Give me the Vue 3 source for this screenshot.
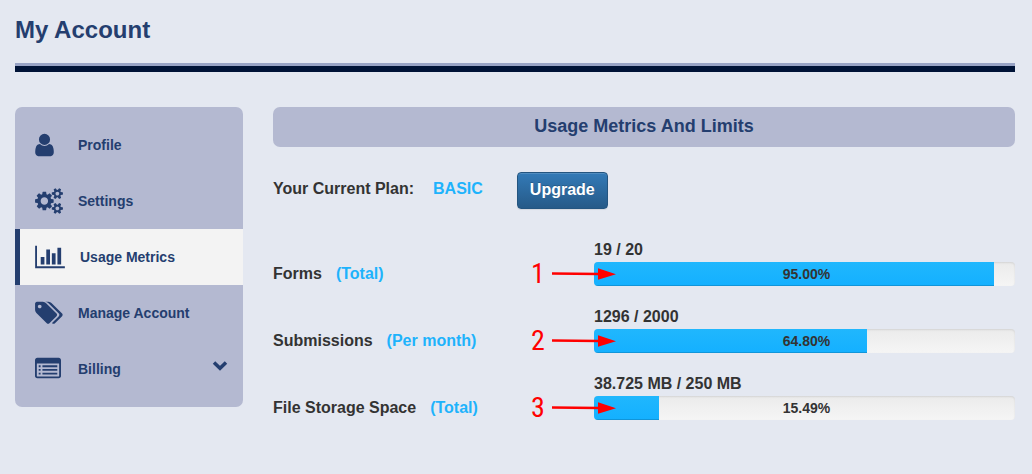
<script setup>
import { ref } from 'vue'

const active = ref('usage')

// icon box is 1792 units high, w is the drawn width in px
const menu = [
  {
    id: 'profile', label: 'Profile', w: 19, box: '256 0 1280 1792',
    d: 'M1536 1399q0 109-62.5 187t-150.5 78h-854q-88 0-150.5-78t-62.5-187q0-85 8.5-160.5t31.5-152 58.5-131 94-89 134.5-34.5q131 128 313 128t313-128q76 0 134.5 34.5t94 89 58.5 131 31.5 152 8.5 160.5zm-256-887q0 159-112.5 271.5t-271.5 112.5-271.5-112.5-112.5-271.5 112.5-271.5 271.5-112.5 271.5 112.5 112.5 271.5z',
  },
  {
    id: 'settings', label: 'Settings', w: 28, box: '-64 0 1920 1792',
    d: 'M832 896q0-106-75-181t-181-75-181 75-75 181 75 181 181 75 181-75 75-181zm768 512q0-52-38-90t-90-38-90 38-38 90q0 53 37.5 90.5t90.5 37.5 90.5-37.5 37.5-90.5zm0-1024q0-52-38-90t-90-38-90 38-38 90q0 53 37.5 90.5t90.5 37.5 90.5-37.5 37.5-90.5zm-384 421v185q0 10-7 19.5t-16 10.5l-155 24q-11 35-32 76 34 48 90 115 7 11 7 20 0 12-7 19-23 30-82.5 89.5t-78.5 59.5q-11 0-21-7l-115-90q-37 19-77 31-11 108-23 155-7 24-30 24h-186q-11 0-20-7.5t-10-17.5l-23-153q-34-10-75-31l-118 89q-7 7-20 7-11 0-21-8-144-133-144-160 0-9 7-19 10-14 41-53t47-61q-23-44-35-82l-152-24q-10-1-17-9.5t-7-19.5v-185q0-10 7-19.5t16-10.5l155-24q11-35 32-76-34-48-90-115-7-11-7-20 0-12 7-20 22-30 82-89t79-59q11 0 21 7l115 90q34-18 77-32 11-108 23-154 7-24 30-24h186q11 0 20 7.5t10 17.5l23 153q34 10 75 31l118-89q8-7 20-7 11 0 21 8 144 133 144 160 0 8-7 19-12 16-42 54t-45 60q23 48 34 82l152 23q10 2 17 10.5t7 19.5zm640 533v140q0 16-149 31-12 27-30 52 51 113 51 138 0 4-4 7-122 71-124 71-8 0-46-47t-52-68q-20 2-30 2t-30-2q-14 21-52 68t-46 47q-2 0-124-71-4-3-4-7 0-25 51-138-18-25-30-52-149-15-149-31v-140q0-16 149-31 13-29 30-52-51-113-51-138 0-4 4-7 4-2 35-20t59-34 30-16q8 0 46 46.5t52 67.5q20-2 30-2t30 2q51-71 92-112l6-2q4 0 124 70 4 3 4 7 0 25-51 138 17 23 30 52 149 15 149 31zm0-1024v140q0 16-149 31-12 27-30 52 51 113 51 138 0 4-4 7-122 71-124 71-8 0-46-47t-52-68q-20 2-30 2t-30-2q-14 21-52 68t-46 47q-2 0-124-71-4-3-4-7 0-25 51-138-18-25-30-52-149-15-149-31v-140q0-16 149-31 13-29 30-52-51-113-51-138 0-4 4-7 4-2 35-20t59-34 30-16q8 0 46 46.5t52 67.5q20-2 30-2t30 2q51-71 92-112l6-2q4 0 124 70 4 3 4 7 0 25-51 138 17 23 30 52 149 15 149 31z',
  },
  {
    id: 'usage', label: 'Usage Metrics', w: 30, box: '0 0 2048 1792',
    d: 'M640 896v512h-256v-512h256zm384-512v1024h-256v-1024h256zm1024 1152v128h-2048v-1536h128v1408h1920zm-640-896v768h-256v-768h256zm384-384v1152h-256v-1152h256z',
  },
  {
    id: 'manage', label: 'Manage Account', w: 28, box: '0 0 1920 1792',
    d: 'M448 448q0-53-37.5-90.5t-90.5-37.5-90.5 37.5-37.5 90.5 37.5 90.5 90.5 37.5 90.5-37.5 37.5-90.5zm1067 576q0 53-37 90l-491 492q-39 37-91 37-53 0-90-37l-715-716q-38-37-64.5-101t-26.5-117v-416q0-52 38-90t90-38h416q53 0 117 26.5t102 64.5l715 714q37 39 37 91zm384 0q0 53-37 90l-491 492q-39 37-91 37-36 0-59-14t-53-45l470-470q37-37 37-90 0-52-37-91l-715-714q-38-38-102-64.5t-117-26.5h224q53 0 117 26.5t102 64.5l715 714q37 39 37 91z',
  },
  {
    id: 'billing', label: 'Billing', w: 26, box: '0 0 1792 1792', more: true,
    d: 'M256 640h128v128h-128zM512 640h1024v128h-1024zM256 896h128v128h-128zM512 896h1024v128h-1024zM256 1152h128v128h-128zM512 1152h1024v128h-1024zM1664 1376v-832q0-13-9.500-22.500t-22.500-9.500h-1472q-13 0-22.500 9.500t-9.500 22.500v832q0 13 9.500 22.500t22.500 9.500h1472q13 0 22.500-9.500t9.500-22.500zm128-1088v1088q0 66-47 113t-113 47h-1472q-66 0-113-47t-47-113v-1088q0-66 47-113t113-47h1472q66 0 113 47t47 113z',
  },
]

const metrics = [
  { n: 1, name: 'Forms', scope: 'Total', usage: '19 / 20', pct: '95.00' },
  { n: 2, name: 'Submissions', scope: 'Per month', usage: '1296 / 2000', pct: '64.80' },
  { n: 3, name: 'File Storage Space', scope: 'Total', usage: '38.725 MB / 250 MB', pct: '15.49' },
]
</script>

<template>
  <div class="account">
    <header class="page-head">
      <h1>My Account</h1>
    </header>

    <div class="columns">
      <nav class="side">
        <a
          v-for="m in menu"
          :key="m.id"
          href="#"
          class="side-item"
          :class="{ active: active === m.id }"
          @click.prevent="active = m.id"
        >
          <span class="side-icon">
            <svg :width="m.w" height="26" :viewBox="m.box" aria-hidden="true"><path :d="m.d" /></svg>
          </span>
          <span>{{ m.label }}</span>
          <svg v-if="m.more" class="chevron" width="16" height="16" viewBox="0 0 16 16" aria-hidden="true">
            <path d="M2 4.500L8 10.300L14 4.500" />
          </svg>
        </a>
      </nav>

      <main class="content">
        <h2>Usage Metrics And Limits</h2>

        <div class="plan">
          <span>Your Current Plan:</span>
          <span class="blue">BASIC</span>
          <button type="button" class="upgrade">Upgrade</button>
        </div>

        <section v-for="m in metrics" :key="m.n" class="metric">
          <div class="metric-name">
            <span :id="'metric-' + m.n">{{ m.name }}</span>
            <span class="blue">({{ m.scope }})</span>
          </div>
          <div class="metric-value">
            <div class="usage">{{ m.usage }}</div>
            <div
              class="track"
              role="progressbar"
              :aria-labelledby="'metric-' + m.n"
              :aria-valuenow="m.pct"
              aria-valuemin="0"
              aria-valuemax="100"
            >
              <div class="fill" :style="{ width: m.pct + '%' }" />
              <span class="pct">{{ m.pct }}%</span>
            </div>
            <div class="callout">
              <span>{{ m.n }}</span>
              <svg width="66" height="14" viewBox="0 0 66 14" aria-hidden="true">
                <path d="M1 6.500L48 7" stroke="#f00" stroke-width="2.400" />
                <path d="M47 1.200L65 7.300L47 12.800z" fill="#f00" />
              </svg>
            </div>
          </div>
        </section>
      </main>
    </div>
  </div>
</template>

<style>
body { background:#e4e8f1; }
</style>

<style scoped>
.account {
  padding:15px 17px 15px 15px;
  font-family:"Liberation Sans", Arial, sans-serif;
  font-size:16px; line-height:20px; font-weight:bold; color:#333;
}
h1, h2 { margin:0; color:#243e6f; }
h1 { font-size:24px; line-height:30px; }

.page-head::after { content:""; display:block; height:6px; margin-top:18px; border-top:3px solid #98a3c5; background:#001337; }

.columns { display:flex; align-items:flex-start; gap:30px; padding-top:35px; }

.side { flex:0 0 228px; padding:10px 0; border-radius:7px; background:#b4b9d1; }
.side-item {
  display:flex; align-items:center; gap:15px; box-sizing:border-box;
  height:56px; padding:0 15px; border-left:5px solid transparent;
  color:#243e6f; font-size:14px; text-decoration:none;
}
.side-item.active { background:#f3f3f3; border-left-color:#243e6f; }
.side-icon { display:flex; min-width:28px; }
.side-icon svg { display:block; fill:currentColor; }
.chevron { margin-left:auto; padding-bottom:6px; fill:none; stroke:currentColor; stroke-width:3.5; }

.content { flex:1; min-width:0; }
h2 { height:40px; border-radius:7px; background:#b4b9d1; font-size:18px; line-height:38px; text-align:center; }

.blue { color:#1eb3fc; }
.plan { display:flex; align-items:center; gap:19px; padding:25px 0 30px; }
.plan span { padding-bottom:4px; }
.upgrade {
  margin-left:15px; padding:6px 12px 7px; border:1px solid #245580; border-radius:4px;
  background:linear-gradient(#337ab7, #265a88); color:#fff;
  font:bold 16px/22px "Liberation Sans", Arial, sans-serif;
  text-shadow:0 -1px 0 rgba(0,0,0,.2);
  box-shadow:inset 0 1px 0 rgba(255,255,255,.15), 0 1px 1px rgba(0,0,0,.075);
  cursor:pointer;
}

.metric { display:grid; grid-template-columns:321px 1fr; align-items:end; margin-bottom:20px; }
.metric-name { display:flex; gap:14px; padding-bottom:2px; }
.metric-value { position:relative; }
.usage { padding:1px 0 2px; }
.track {
  position:relative; height:24px; overflow:hidden; border-radius:4px;
  background:linear-gradient(#ebebeb, #f5f5f5); box-shadow:inset 0 1px 2px rgba(0,0,0,.1);
}
.fill { height:100%; background:linear-gradient(#20b7fd, #14b0ff); box-shadow:inset 0 -1px 0 rgba(0,0,0,.15); }
.pct { position:absolute; inset:0 0 0 4px; font-size:14px; line-height:24px; text-align:center; }

/* numbered arrow laid over the start of each bar */
.callout {
  position:absolute; left:-63px; bottom:0; display:flex; align-items:center; gap:6px;
  height:24px; color:#f00; font-family:"Roboto Condensed", Roboto, sans-serif; font-size:28px; font-weight:400;
}
</style>
